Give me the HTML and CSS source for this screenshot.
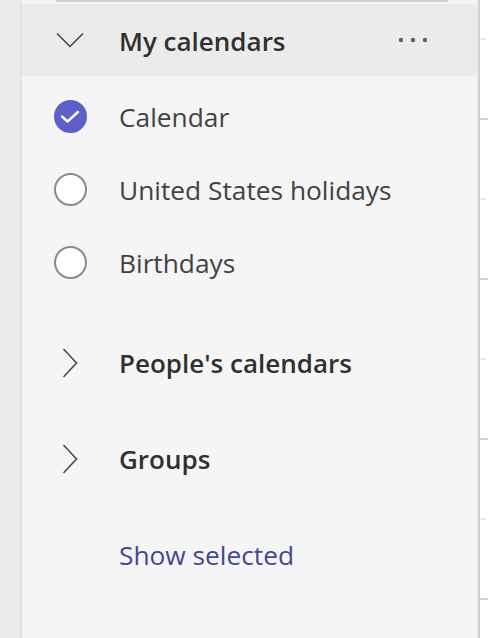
FILE: index.html
```html
<!DOCTYPE html>
<html lang="en">
<head>
<meta charset="utf-8">
<title>My calendars</title>
<link rel="stylesheet" href="styles.css">
</head>
<body>
<div class="app">
  <div class="rail"></div>
  <nav class="panel">
    <div class="scrollbar"></div>
    <div class="row header">
      <span class="icon">
        <svg width="28" height="16" viewBox="0 0 28 16"><path d="M1 1.5 L14 14.5 L27 1.5" fill="none" stroke="#424242" stroke-width="1.5"/></svg>
      </span>
      <span class="label strong">My calendars</span>
      <span class="more">
        <svg width="30" height="6" viewBox="0 0 30 6"><circle cx="3" cy="3" r="2.2" fill="#616161"/><circle cx="15" cy="3" r="2.2" fill="#616161"/><circle cx="27" cy="3" r="2.2" fill="#616161"/></svg>
      </span>
    </div>
    <ul class="list">
      <li class="row item">
        <span class="icon"><span class="check on">
          <svg width="20" height="14" viewBox="0 0 20 14"><path d="M2 6.5 L7.5 11.5 L18 2" fill="none" stroke="#fff" stroke-width="2.4" stroke-linecap="round" stroke-linejoin="round"/></svg>
        </span></span>
        <span class="label">Calendar</span>
      </li>
      <li class="row item">
        <span class="icon"><span class="check"></span></span>
        <span class="label">United States holidays</span>
      </li>
      <li class="row item">
        <span class="icon"><span class="check"></span></span>
        <span class="label">Birthdays</span>
      </li>
    </ul>
    <div class="row group">
      <span class="icon">
        <svg width="16" height="30" viewBox="0 0 16 30"><path d="M1.5 1 L14.5 15 L1.5 29" fill="none" stroke="#424242" stroke-width="1.5"/></svg>
      </span>
      <span class="label strong">People's calendars</span>
    </div>
    <div class="row group">
      <span class="icon">
        <svg width="16" height="30" viewBox="0 0 16 30"><path d="M1.5 1 L14.5 15 L1.5 29" fill="none" stroke="#424242" stroke-width="1.5"/></svg>
      </span>
      <span class="label strong">Groups</span>
    </div>
    <div class="row group">
      <span class="icon"></span>
      <a class="label link" href="#">Show selected</a>
    </div>
  </nav>
  <div class="grid">
    <div class="slot first light"></div>
    <div class="slot dark"></div>
    <div class="slot light"></div>
    <div class="slot dark"></div>
    <div class="slot light"></div>
    <div class="slot dark"></div>
    <div class="slot light"></div>
    <div class="slot dark"></div>
  </div>
</div>
</body>
</html>
```

FILE: styles.css
```css
* { box-sizing: border-box; }

html, body {
  margin: 0;
  padding: 0;
  height: 100%;
  overflow: hidden;
}

body {
  font-family: "Open Sans", "Noto Sans", sans-serif;
  background: #ebebeb;
  color: #424242;
}

.app {
  display: flex;
  height: 638px;
}

.rail {
  width: 20px;
  background: #ebebeb;
  flex: none;
}

.panel {
  width: 458px;
  flex: none;
  background: #f5f5f5;
  border-left: 2px solid #e2e2e2;
  border-right: 1px solid #ececec;
  display: flex;
  flex-direction: column;
}

.scrollbar {
  height: 2px;
  margin: 0 29px 0 34px;
  background: #d1d1d1;
}

.row {
  display: flex;
  align-items: center;
  padding-left: 24px;
}

.icon {
  width: 48px;
  flex: none;
  display: flex;
  align-items: center;
  justify-content: center;
}

.icon svg { display: block; }

.label {
  margin-left: 25px;
  font-size: 26.3px;
  line-height: 34px;
  white-space: nowrap;
}

.strong {
  font-weight: 600;
  font-size: 26px;
  color: #303030;
}

.header {
  margin-top: 2px;
  height: 72px;
  background: #ebebeb;
  border-radius: 4px;
}

.header .label { position: relative; top: 1px; }

.more {
  margin-left: auto;
  margin-right: 49px;
  display: flex;
}

.list {
  list-style: none;
  margin: 0;
  padding: 4px 0 0;
}

.item { height: 73px; }

.check {
  width: 33px;
  height: 33px;
  border-radius: 50%;
  background: #fff;
  border: 2px solid #8a8a8a;
  display: flex;
  align-items: center;
  justify-content: center;
}

.check.on {
  background: #5b5fc7;
  border-color: #5b5fc7;
}

.group { height: 96px; }
.list + .group { margin-top: 16px; }

.link {
  color: #444791;
  text-decoration: none;
}

.grid {
  flex: 1;
  background: #fff;
  border-left: 2px solid #d1d1d1;
  display: flex;
  flex-direction: column;
}

.slot {
  height: 80px;
  flex: none;
  border-bottom: 2px solid #d1d1d1;
}

.slot.first { height: 40px; }

.slot.light {
  border-bottom-color: #e8e8e8;
  margin-right: 2px;
}
```
